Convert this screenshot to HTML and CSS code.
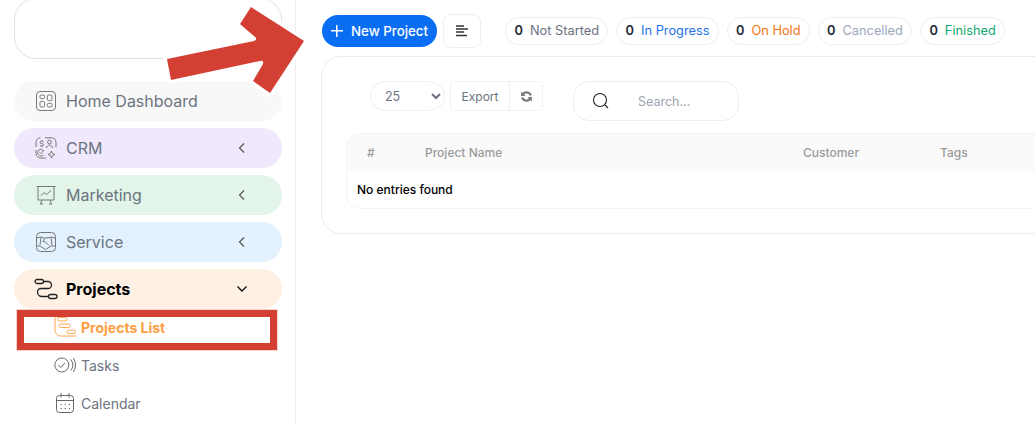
FILE: index.html
```html
<!DOCTYPE html>
<html lang="en">
<head>
    <meta charset="UTF-8">
    <meta name="viewport" content="width=device-width, initial-scale=1.0">
    <title>Projects</title>
    <link rel="stylesheet" href="styles.css">
</head>
<body>
    <div class="page">
        <aside class="sidebar">
            <div class="logo-box"></div>
            <nav class="nav">
                <a class="nav-item nav-home">
                    <svg class="nav-icon" viewBox="0 0 22 22"><rect x="1.500" y="1.500" width="19" height="19" rx="3.500"/><rect x="5" y="5" width="4.600" height="3.600" rx="1.200"/><rect x="12.400" y="5" width="4.600" height="5.600" rx="1.200"/><rect x="5" y="11.400" width="4.600" height="5.600" rx="1.200"/><rect x="12.400" y="13.400" width="4.600" height="3.600" rx="1.200"/></svg>
                    <span>Home Dashboard</span>
                </a>
                <a class="nav-item nav-crm">
                    <svg class="nav-icon" viewBox="0 0 22 22"><path d="M10 .800h6.500a4.500 4.500 0 0 1 4.500 4.500v5M1 10V5.300A4.500 4.500 0 0 1 5.500.800M1 13v3.500A4.500 4.500 0 0 0 5.500 21H11"/><path d="M8.500 4.300H6.300a1.100 1.100 0 0 0 0 2.300h1a1.100 1.100 0 0 1 0 2.300H5M6.800 3v1.300M6.800 9V10"/><circle cx="14.500" cy="5" r="1.900"/><path d="M11.500 11c.3-1.800 1.400-2.800 3-2.800s2.700 1 3 2.800"/><path d="M8.800 14a3.300 3.300 0 1 0-.3 3.800M4.500 15.300l1.300 1.300 2.500-2.700"/><path d="M16.500 14l1 2.500 2.500 1-2.500 1-1 2.500-1-2.500-2.500-1 2.500-1z"/></svg>
                    <span>CRM</span>
                    <svg class="chevron" viewBox="0 0 8 12"><path d="M6 1.500 1.500 6 6 10.500"/></svg>
                </a>
                <a class="nav-item nav-marketing">
                    <svg class="nav-icon" viewBox="0 0 22 22"><path d="M1.500 2.500h19M3 2.500v13.500h16V2.500M7 16l-1.500 4M15 16l1.500 4M5 20h3M14 20h3"/><path d="M6 11.500l3-3 2.500 2 4.500-4"/></svg>
                    <span>Marketing</span>
                    <svg class="chevron" viewBox="0 0 8 12"><path d="M6 1.500 1.500 6 6 10.500"/></svg>
                </a>
                <a class="nav-item nav-service">
                    <svg class="nav-icon" viewBox="0 0 22 22"><rect x="1.500" y="1.500" width="19" height="19" rx="4"/><path d="M1.500 7 6 6l3 1M13 7l3-1 4.500 1M1.500 15H5l5.500 3.500L16 15h4.500"/><path d="M6 6.500 5 14M16 6.500l1 7.500M13 6.800H10L8 10.500l2.500.5 3.500 3.500"/></svg>
                    <span>Service</span>
                    <svg class="chevron" viewBox="0 0 8 12"><path d="M6 1.500 1.500 6 6 10.500"/></svg>
                </a>
                <a class="nav-item nav-projects">
                    <svg class="nav-icon icon-dark" viewBox="0 0 24 22"><rect x="1" y="1.500" width="8.500" height="4" rx="2"/><rect x="14.500" y="16.500" width="8.500" height="4" rx="2"/><path d="M9.500 3.500H14a3.500 3.500 0 0 1 3.500 3.500 3.500 3.500 0 0 1-3.500 3.500H7a3.500 3.500 0 0 0-3.500 3.500A4.500 4.500 0 0 0 8 18.500h6.500"/></svg>
                    <span>Projects</span>
                    <svg class="chevron chevron-open" viewBox="0 0 12 8"><path d="M1.500 1.500 6 6l4.500-4.500"/></svg>
                </a>
                <a class="sub-item sub-active">
                    <svg class="sub-icon" viewBox="0 0 22 22"><path d="M1 0v14.500A5.500 5.500 0 0 0 6.500 20H22"/><rect x="3.500" y="1.500" width="9.500" height="3.500" rx="1.700"/><rect x="5" y="8" width="11" height="3.500" rx="1.700"/><rect x="13" y="14" width="8.500" height="3.500" rx="1.700"/></svg>
                    <span>Projects List</span>
                </a>
                <a class="sub-item">
                    <svg class="sub-icon" viewBox="0 0 22 22"><circle cx="7.800" cy="11" r="7"/><path d="M4.500 11.200l2.400 2.300 4-4.500M16.800 5.500a9 9 0 0 1 0 11M19.300 4a12 12 0 0 1 0 14"/></svg>
                    <span>Tasks</span>
                </a>
                <a class="sub-item">
                    <svg class="sub-icon" viewBox="0 0 22 22"><rect x="2.500" y="3.500" width="17" height="17" rx="3"/><path d="M2.500 8.500h17M7 1v4.500M15 1v4.500"/><path stroke-dasharray="1.200 3" d="M6.500 12.500h10M6.500 16.500h10"/></svg>
                    <span>Calendar</span>
                </a>
            </nav>
        </aside>

        <main class="content">
            <div class="toolbar">
                <button class="btn-new"><span class="plus"></span>New Project</button>
                <button class="btn-filter">
                    <svg viewBox="0 0 12 12" width="12" height="12"><path d="M0 1h8M0 4h12M0 7h8M0 10.500h11"/></svg>
                </button>
                <div class="chips">
                    <span class="chip"><b>0</b>Not Started</span>
                    <span class="chip chip-blue"><b>0</b>In Progress</span>
                    <span class="chip chip-orange"><b>0</b>On Hold</span>
                    <span class="chip chip-grey"><b>0</b>Cancelled</span>
                    <span class="chip chip-green"><b>0</b>Finished</span>
                </div>
            </div>

            <section class="card">
                <div class="controls">
                    <select class="page-size">
                        <option>25</option>
                    </select>
                    <div class="btn-group">
                        <button class="btn-export">Export</button>
                        <button class="btn-refresh">
                            <svg viewBox="0 0 12 12" width="13" height="13"><path d="M11 4.800A5.200 5.200 0 0 0 2.300 2.700L1 1.400V5.600h4.200L3.700 4.100A3.300 3.300 0 0 1 9 5.300zM1 7.200A5.200 5.200 0 0 0 9.700 9.300L11 10.600V6.400H6.800l1.500 1.500A3.300 3.300 0 0 1 3 6.700z"/></svg>
                        </button>
                    </div>
                    <div class="search">
                        <svg viewBox="0 0 18 18" width="18" height="18"><circle cx="8" cy="8" r="6.500"/><path d="M13 13l3 3"/></svg>
                        <span>Search...</span>
                    </div>
                </div>

                <table class="data-table">
                    <thead>
                        <tr>
                            <th class="col-num">#</th>
                            <th class="col-name">Project Name</th>
                            <th class="col-customer">Customer</th>
                            <th class="col-tags">Tags</th>
                        </tr>
                    </thead>
                    <tbody>
                        <tr>
                            <td colspan="4">No entries found</td>
                        </tr>
                    </tbody>
                </table>
            </section>
        </main>
    </div>

    <!-- annotations drawn over the screenshot -->
    <div class="mark-box"></div>
    <svg class="mark-arrow" viewBox="0 0 1035 425" width="1035" height="425">
        <path d="M167 59 254 41Q258 39 255 37L240 24 251 7 304 41 270 93 253 81 263 64Q264 60 260 61L171 80Z"/>
    </svg>
</body>
</html>
```

FILE: styles.css
```css
* {
    box-sizing: border-box;
}

html, body {
    margin: 0;
    height: 100%;
    overflow: hidden;
    background: #fff;
}

body {
    font-family: 'Inter', sans-serif;
    color: #6b7280;
}

button, select {
    font-family: inherit;
}

.page {
    display: flex;
    height: 425px;
}

/* sidebar */
.sidebar {
    flex: 0 0 296px;
    padding: 0 13px 0 14px;
    border-right: 1px solid #ececec;
}

.logo-box {
    height: 61px;
    margin-top: -2px;
    border: 1px solid #e2e2e2;
    border-radius: 22px;
}

.nav {
    display: flex;
    flex-direction: column;
    margin-top: 22px;
}

.nav-item {
    display: flex;
    align-items: center;
    gap: 9px;
    height: 40px;
    margin-bottom: 7px;
    padding-left: 21px;
    border-radius: 20px;
    font-size: 16px;
    color: #6c747f;
}

.nav-icon {
    flex: 0 0 22px;
    width: 22px;
    height: 22px;
    fill: none;
    stroke: #777;
    stroke-width: 1;
}

.icon-dark {
    flex-basis: 24px;
    width: 24px;
    margin: 0 -1px;
    stroke: #222;
    stroke-width: 1.300;
}

.chevron {
    width: 8px;
    height: 12px;
    margin-left: auto;
    margin-right: 36px;
    fill: none;
    stroke: #555;
    stroke-width: 1.200;
}

.chevron-open {
    width: 12px;
    height: 8px;
    margin-right: 34px;
    stroke: #111;
    stroke-width: 1.400;
}

.nav-home { background: #f8f8f8; }
.nav-crm { background: #f0e9fd; }
.nav-marketing { background: #e3f4e9; }
.nav-service { background: #e2f1fd; }

.nav-projects {
    margin-bottom: -1px;
    background: #fef0e2;
    color: #000;
    font-weight: 700;
}

.sub-item {
    display: flex;
    align-items: center;
    gap: 5px;
    height: 38px;
    padding-left: 40px;
    font-size: 14px;
    color: #6c747f;
}

.sub-icon {
    flex: 0 0 22px;
    width: 22px;
    height: 22px;
    fill: none;
    stroke: #666;
    stroke-width: 1;
}

.sub-active {
    color: #ff9d3f;
    font-weight: 700;
}

.sub-active .sub-icon {
    stroke: #ffa64f;
}

/* main */
.content {
    flex: 1;
    min-width: 0;
    padding: 14px 0 0 25px;
    overflow: hidden;
}

.toolbar {
    display: flex;
    align-items: center;
    height: 34px;
    padding-left: 1px;
}

.btn-new {
    display: flex;
    align-items: center;
    gap: 8px;
    width: 115px;
    height: 32px;
    padding: 0 0 0 9px;
    border: none;
    border-radius: 16px;
    background: #0a6ef5;
    color: #fff;
    font-size: 13.300px;
    font-weight: 500;
}

.plus {
    width: 12px;
    height: 12px;
    background: linear-gradient(#fff, #fff) center / 100% 1.500px no-repeat,
                linear-gradient(#fff, #fff) center / 1.500px 100% no-repeat;
}

.btn-filter {
    display: flex;
    align-items: center;
    justify-content: center;
    width: 38px;
    height: 34px;
    margin-left: 6px;
    padding: 0;
    border: 1px solid #eee;
    border-radius: 8px;
    background: #fff;
}

.btn-filter svg {
    fill: none;
    stroke: #333;
    stroke-width: 1.300;
}

.chips {
    display: flex;
    gap: 8px;
    margin-left: 24px;
}

.chip {
    display: flex;
    align-items: center;
    gap: 7px;
    height: 28px;
    padding: 0 8px 1px 8.500px;
    border: 1px solid #eeeeee;
    border-radius: 14px;
    font-size: 12.800px;
    color: #6b7280;
    white-space: nowrap;
}

.chip b {
    color: #1f2937;
    font-weight: 600;
}

.chip-blue { color: #2473e6; }
.chip-orange { color: #f97316; }
.chip-grey { color: #9ca8bb; }
.chip-green { color: #10a971; }

.card {
    width: 780px;
    height: 178px;
    margin-top: 8px;
    padding: 24px 0 0 24px;
    border: 1px solid #ececec;
    border-radius: 20px;
}

.controls {
    display: flex;
    align-items: flex-start;
    height: 40px;
    margin-bottom: 12px;
    padding-left: 24px;
}

.page-size {
    width: 75px;
    height: 30px;
    padding-left: 10px;
    border: 1px solid #f0f0f0;
    border-radius: 15px;
    background-color: #fff;
    color: #6b7280;
    font-size: 12.500px;
}

.btn-group {
    display: flex;
    height: 30px;
    margin-left: 5px;
    border: 1px solid #f0f0f0;
    border-radius: 4px;
}

.btn-group button {
    padding: 0;
    border: none;
    background: none;
    color: #6b7280;
    font-size: 12px;
}

.btn-export {
    width: 59px;
    border-right: 1px solid #f0f0f0 !important;
}

.btn-refresh {
    display: flex;
    align-items: center;
    justify-content: center;
    width: 32px;
}

.btn-refresh svg {
    fill: #777;
}

.search {
    display: flex;
    align-items: center;
    gap: 28px;
    width: 166px;
    height: 40px;
    margin-left: 30px;
    padding-left: 18px;
    border: 1px solid #eeeeee;
    border-radius: 16px;
    font-size: 12.500px;
    color: #9ca3af;
}

.search svg {
    fill: none;
    stroke: #222;
    stroke-width: 1.100;
}

.data-table {
    width: 760px;
    table-layout: fixed;
    border-collapse: separate;
    border-spacing: 0;
    border: 1px solid #f4f4f4;
    border-radius: 14px 0 0 14px;
}

.data-table th {
    height: 37px;
    padding: 0;
    background: #fafafa;
    color: #9a9a9a;
    font-size: 12px;
    font-weight: 500;
    text-align: left;
}

.data-table th.col-num {
    border-top-left-radius: 14px;
}

.col-num {
    width: 78px;
    padding-left: 20px !important;
}

.col-name { width: 378px; }
.col-customer { width: 137px; }

.data-table td {
    height: 37px;
    padding: 0 0 1px 10px;
    color: #000;
    font-size: 12px;
    font-weight: 500;
}

/* annotations */
.mark-box {
    position: absolute;
    left: 17px;
    top: 310px;
    width: 260px;
    height: 40px;
    border: 7px solid #d33f33;
    box-shadow: 0 0 0 1px #f6d5d1;
}

.mark-arrow {
    position: absolute;
    left: 0;
    top: 0;
    pointer-events: none;
}

.mark-arrow path {
    fill: #d33f33;
    stroke: #fff;
    stroke-width: 7;
    stroke-linejoin: round;
    paint-order: stroke;
}
```
